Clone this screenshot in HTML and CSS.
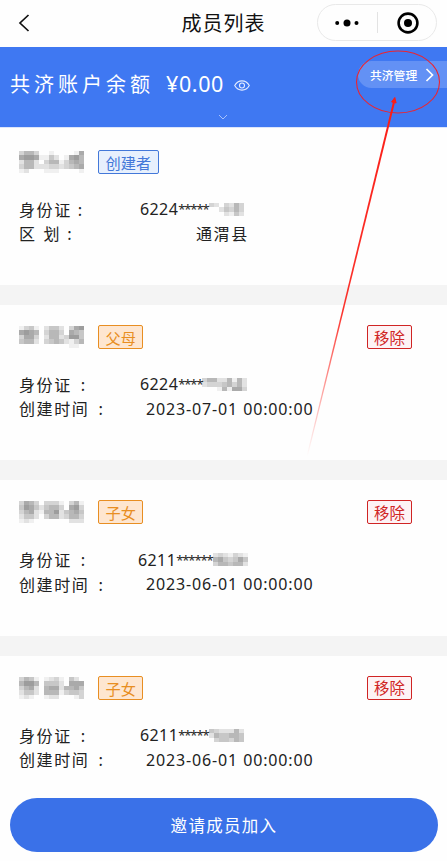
FILE: index.html
```html
<!DOCTYPE html>
<html lang="zh-CN">
<head>
    <meta charset="UTF-8">
    <meta name="viewport" content="width=device-width, initial-scale=1.0">
    <title>成员列表</title>
    <link rel="stylesheet" href="styles.css">
</head>
<body>
    <!-- Header -->
    <header>
        <svg class="back" viewBox="0 0 12 18"><path d="M10.5 1 2 9l8.500 8"/></svg>
        <h1>成员列表</h1>
        <div class="capsule">
            <svg class="dots" viewBox="0 0 24 8"><circle cx="2.200" cy="4" r="2"/><circle cx="12" cy="4" r="3.500"/><circle cx="21.500" cy="4" r="2"/></svg>
            <span class="divider"></span>
            <svg class="target" viewBox="0 0 22 22"><circle class="ring" cx="11" cy="11" r="9.400"/><circle cx="11" cy="11" r="4"/></svg>
        </div>
    </header>

    <!-- Balance -->
    <section class="balance">
        <div class="balance-row">
            <span class="balance-label">共济账户余额</span>
            <span class="amount">¥0.00</span>
            <svg class="eye" viewBox="0 0 16 11"><path d="M.7 5.500C4.200-.7 11.800-.7 15.300 5.500 11.800 11.700 4.200 11.700.7 5.500Z"/><circle cx="8" cy="5.500" r="2.500"/></svg>
        </div>
        <a class="manage" href="#">共济管理<svg viewBox="0 0 9 14"><path d="m1.500 1 6 6-6 6"/></svg></a>
        <svg class="expand" viewBox="0 0 10 6"><path d="m1 1 4 4 4-4"/></svg>
    </section>

    <!-- Members -->
    <main>
        <section class="card">
            <div class="card-head">
                <svg class="mosaic name" data-cells="3553001000016,6776114201675,2552035513565,3552223323456,1200011100001"></svg>
                <span class="tag creator">创建者</span>
            </div>
            <div class="row">
                <span class="label">身份证<i class="colon near">:</i></span>
                <span class="value">6224<b>*****</b><svg class="mosaic number" data-cells="3203253,0024353,0002142"></svg></span>
            </div>
            <div class="row">
                <span class="label">区<i class="space"></i>划<i class="colon near">:</i></span>
                <span class="value place">通渭县</span>
            </div>
        </section>

        <section class="card">
            <div class="card-head">
                <svg class="mosaic name" data-cells="1341024420367,6765035530654,3663025523774,4552034542135,0000000000110"></svg>
                <span class="tag family">父母</span>
                <button class="remove">移除</button>
            </div>
            <div class="row">
                <span class="label">身份证<i class="colon">:</i></span>
                <span class="value">6224<b>****</b><svg class="mosaic number wide" data-cells="355225152,233345352,000151663"></svg></span>
            </div>
            <div class="row">
                <span class="label">创建时间<i class="colon">:</i></span>
                <span class="value date">2023-07-01 00:00:00</span>
            </div>
        </section>

        <section class="card">
            <div class="card-head">
                <svg class="mosaic name" data-cells="3653033310351,4764245530673,3562155724564,2442035523553,1210000000222"></svg>
                <span class="tag family">子女</span>
                <button class="remove">移除</button>
            </div>
            <div class="row">
                <span class="label">身份证<i class="colon">:</i></span>
                <span class="value six">6211<b>******</b><svg class="mosaic number" data-cells="2321321,5643464,3554552"></svg></span>
            </div>
            <div class="row">
                <span class="label">创建时间<i class="colon">:</i></span>
                <span class="value date">2023-06-01 00:00:00</span>
            </div>
        </section>

        <section class="card">
            <div class="card-head">
                <svg class="mosaic name" data-cells="3541012310420,5775044420666,3562056625564,2442055513443,1210012200013"></svg>
                <span class="tag family">子女</span>
                <button class="remove">移除</button>
            </div>
            <div class="row">
                <span class="label">身份证<i class="colon">:</i></span>
                <span class="value">6211<b>*****</b><svg class="mosaic number" data-cells="4322252,2544554,0344354"></svg></span>
            </div>
            <div class="row">
                <span class="label">创建时间<i class="colon">:</i></span>
                <span class="value date">2023-06-01 00:00:00</span>
            </div>
        </section>
    </main>

    <footer>
        <button class="invite">邀请成员加入</button>
    </footer>

    <!-- Red pointer over the manage link -->
    <svg class="pointer" viewBox="0 0 447 861">
        <defs>
            <linearGradient id="fade" gradientUnits="userSpaceOnUse" x1="394" y1="98" x2="308" y2="456">
                <stop offset="0" stop-color="#fb1d16"/>
                <stop offset=".6" stop-color="#fb1d16" stop-opacity=".9"/>
                <stop offset="1" stop-color="#fb1d16" stop-opacity="0"/>
            </linearGradient>
        </defs>
        <ellipse cx="398" cy="82" rx="41.500" ry="31"/>
        <path class="shaft" d="m393.200 101 2 .5L307.800 456h-1.200Z"/>
        <path class="head" d="m394.800 97.500 1.300 5.500-4.500-1.100Z"/>
    </svg>

    <script>
        // Each digit is the darkness of one block, 0 is empty
        document.querySelectorAll(".mosaic").forEach(svg => {
            const rows = svg.dataset.cells.split(",");
            svg.setAttribute("viewBox", `0 0 ${rows[0].length * 5} ${rows.length * 5}`);
            svg.setAttribute("preserveAspectRatio", "none");
            svg.innerHTML = rows.map((row, y) => [...row].map((n, x) =>
                `<rect x="${x * 5}" y="${y * 5}" width="5" height="5" fill-opacity="${n * 0.06}"/>`
            ).join("")).join("");
        });
    </script>
</body>
</html>
```
FILE: styles.css
```css
* {
    box-sizing: border-box;
}
body {
    position: relative;
    height: 861px;
    margin: 0;
    overflow: hidden;
    background-color: #fefefe;
    color: #222;
    font-family: "Kaiti SC", KaiTi, "Noto Sans CJK SC", sans-serif;
    display: flex;
    flex-direction: column;
}
svg {
    display: block;
    flex: none;
}
button {
    font-family: inherit;
    padding: 0;
}
i {
    font-style: normal;
}

/* Header */
header {
    height: 47px;
    flex: none;
    display: grid;
    grid-template-columns: 130px 1fr 130px;
    align-items: center;
}
h1 {
    margin: 0;
    padding-bottom: 2px;
    text-align: center;
    font-size: 20px;
    font-weight: 400;
    letter-spacing: 1px;
    line-height: 28px;
    color: #111;
}
.back {
    width: 12px;
    height: 18px;
    margin: -2px 0 0 18px;
    fill: none;
    stroke: #111;
    stroke-width: 1.7;
}
.capsule {
    display: flex;
    align-items: center;
    width: 120px;
    height: 37px;
    margin-top: -2px;
    border: 1px solid #e9e9e9;
    border-radius: 19px;
    padding: 0 17px;
}
.dots {
    width: 24px;
    height: 8px;
}
.divider {
    width: 1px;
    height: 21px;
    margin-left: 18px;
    background-color: #e3e3e3;
}
.target {
    width: 22px;
    height: 22px;
    margin-left: 19px;
}
.ring {
    fill: none;
    stroke: #000;
    stroke-width: 2.6;
}

/* Balance */
.balance {
    height: 81px;
    flex: none;
    padding: 14px 0 0 10px;
    border-bottom: 1px solid #dbe5fb;
    background-color: #3f78f2;
    color: white;
    display: grid;
    grid-template-columns: 1fr 89px;
    grid-template-rows: 51px 1fr;
    align-items: start;
}
.balance-row {
    display: flex;
    align-items: center;
    height: 44px;
}
.balance-label {
    font-size: 20px;
    letter-spacing: 4px;
}
.amount {
    font-family: "Noto Sans", sans-serif;
    font-size: 21.5px;
    letter-spacing: 0.6px;
    margin-left: 12px;
}
.eye {
    width: 16px;
    height: 11px;
    margin: 4px 0 0 10px;
    fill: none;
    stroke: #e6edff;
    stroke-width: 1.1;
}
.manage {
    display: flex;
    align-items: center;
    height: 27px;
    padding-left: 12px;
    border-radius: 14px 0 0 14px;
    background-color: #6391f5;
    color: white;
    font-family: "Noto Sans CJK SC", sans-serif;
    font-size: 11.8px;
    font-weight: 500;
    text-decoration: none;
}
.manage svg {
    width: 9px;
    height: 14px;
    margin-left: 8px;
    fill: none;
    stroke: white;
    stroke-width: 1.7;
}
.expand {
    grid-column: 1 / 3;
    justify-self: center;
    width: 10px;
    height: 6px;
    margin: 2px 11px 0 0;
    fill: none;
    stroke: #a9c2fa;
}

/* Member cards */
main {
    flex: 1;
    min-height: 0;
    background-color: #f4f4f4;
    display: flex;
    flex-direction: column;
    gap: 20px;
}
.card {
    height: 155.4px;
    flex: none;
    padding: 20px 35px 0 19px;
    background-color: #fefefe;
}
.card:first-child {
    height: 157px;
    padding-top: 22px;
}
.card-head {
    display: flex;
    align-items: center;
    height: 24px;
    margin-bottom: 23px;
}
.mosaic {
    fill: #171717;
    shape-rendering: crispEdges;
}
.name {
    width: 65px;
    height: 22px;
}
.tag {
    height: 24px;
    margin-left: 14px;
    padding: 0 6.5px;
    border: 1px solid;
    border-radius: 2px;
    font-size: 15.2px;
    line-height: 22px;
}
.creator {
    border-color: #4378d9;
    background-color: #e7f0fd;
    color: #4378d9;
}
.family {
    border-color: #e88e22;
    background-color: #fee6d0;
    color: #e88e22;
}
.remove {
    width: 45px;
    height: 24px;
    margin-left: auto;
    border: 1px solid #d02424;
    border-radius: 2px;
    background-color: #fdf3f5;
    color: #d02424;
    font-size: 15.4px;
    line-height: 21px;
}
.row {
    display: grid;
    grid-template-columns: 121px 1fr;
    align-items: center;
    height: 24.5px;
    font-size: 16px;
    line-height: 24px;
}
.label {
    display: flex;
    margin-top: -1px;
    letter-spacing: 1.6px;
}
.colon {
    margin-left: 9px;
}
.near {
    margin-left: 6px;
}
.space {
    width: 7px;
}
.value {
    display: flex;
    align-items: center;
    font-family: "Noto Sans", sans-serif;
    letter-spacing: 0.4px;
}
.value b {
    font-size: 13px;
    font-weight: 400;
    letter-spacing: -1.1px;
}
.six {
    margin-left: -2px;
}
.date {
    padding-left: 6px;
    letter-spacing: 0.86px;
}
.place {
    margin-top: -1px;
    padding-left: 56px;
    font-family: inherit;
    letter-spacing: 1.6px;
}
.number {
    width: 35px;
    height: 13px;
}
.wide {
    width: 45px;
}

/* Invite button */
footer {
    height: 72px;
    flex: none;
    padding: 9px 9px 0 10px;
    background-color: #fefefe;
}
.invite {
    width: 100%;
    height: 54px;
    border: none;
    border-radius: 27px;
    background-color: #3a71e8;
    color: white;
    font-size: 16.5px;
    letter-spacing: 1.3px;
}

/* Pointer */
.pointer {
    position: absolute;
    top: 0;
    left: 0;
    width: 447px;
    height: 861px;
    pointer-events: none;
}
.pointer ellipse {
    fill: none;
    stroke: #ec2430;
    stroke-width: 1.1;
}
.shaft {
    fill: url(#fade);
}
.head {
    fill: #fb1d16;
    stroke: #fb1d16;
}
```
